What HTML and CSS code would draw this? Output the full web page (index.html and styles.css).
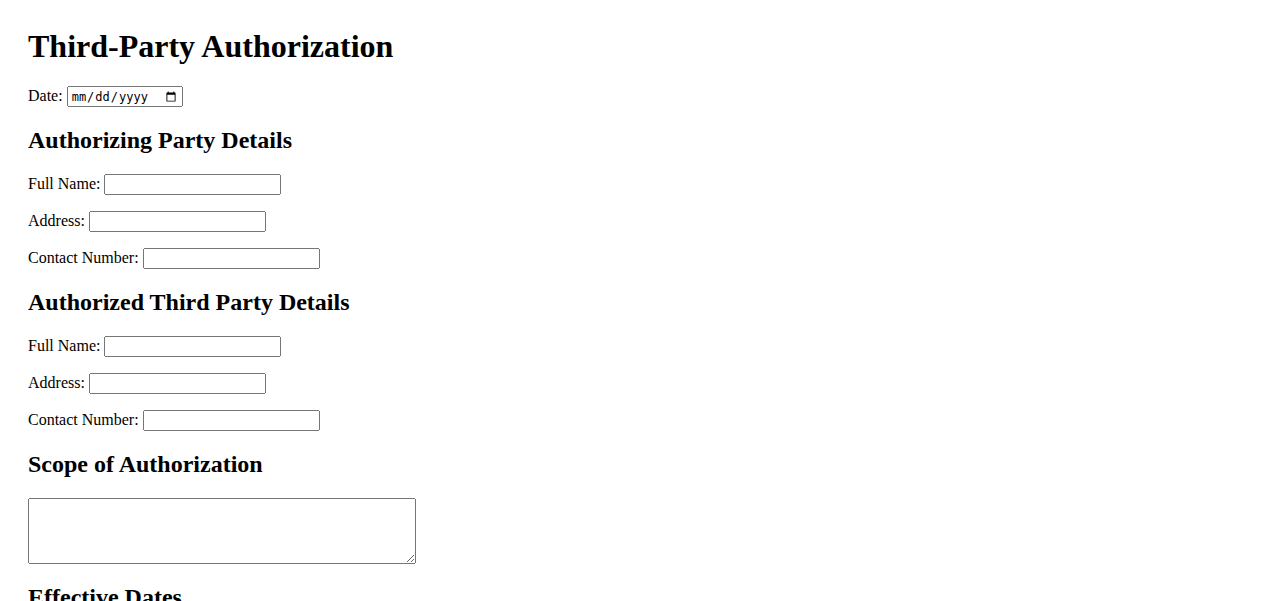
FILE: index.html
```html
<!DOCTYPE html>
<html lang="en">
<head>
<meta charset="utf-8">
<title>Third-Party Authorization</title>
<link rel="stylesheet" href="styles.css">
</head>
<body class="page">
<h1 class="title">Third-Party Authorization</h1>
<div class="field">Date: <input type="date" class="date-input"></div>

<h2 class="section-title">Authorizing Party Details</h2>
<p class="field">Full Name: <input type="text" class="text-input"></p>
<p class="field">Address: <input type="text" class="text-input"></p>
<p class="field">Contact Number: <input type="text" class="text-input"></p>

<h2 class="section-title">Authorized Third Party Details</h2>
<p class="field">Full Name: <input type="text" class="text-input"></p>
<p class="field">Address: <input type="text" class="text-input"></p>
<p class="field">Contact Number: <input type="text" class="text-input"></p>

<h2 class="section-title">Scope of Authorization</h2>
<textarea class="scope"></textarea>

<h2 class="section-title">Effective Dates</h2>
<p class="field">From: <input type="date" class="date-input"></p>
<p class="field">To: <input type="date" class="date-input"></p>

<h2 class="section-title">Signatures</h2>
<p class="field">Authorizing Party Signature: <input type="text" class="text-input"></p>
<p class="field">Authorized Third Party Signature: <input type="text" class="text-input"></p>
</body>
</html>
```

FILE: styles.css
```css
.page {
  margin: 28px;
  font-family: "Liberation Serif", "Times New Roman", serif;
  font-size: 16px;
  color: #000;
  background: #fff;
}
.title {
  font-size: 32px;
  font-weight: bold;
  margin-top: 0;
}
.section-title {
  font-size: 24px;
  font-weight: bold;
}
.text-input {
  width: 177px;
  height: 21px;
  box-sizing: border-box;
}
.date-input {
  width: 116px;
  height: 21px;
  box-sizing: border-box;
  font-size: 12px;
  padding: 1px 2px;
}
.scope {
  display: block;
  width: 388px;
  height: 66px;
  box-sizing: border-box;
}
```
